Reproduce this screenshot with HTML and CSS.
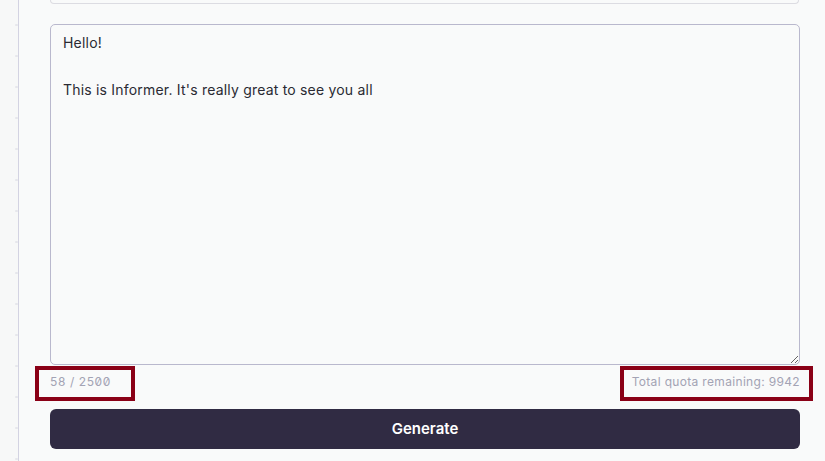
FILE: index.html
```html
<!DOCTYPE html>
<html lang="en">
<head>
<meta charset="utf-8">
<title>Informer</title>
<link rel="stylesheet" href="styles.css">
</head>
<body>
<div class="page">
  <aside class="rail"></aside>
  <main class="main">
    <div class="card-tail"></div>
    <textarea class="message">Hello!

This is Informer. It's really great to see you all</textarea>
    <div class="meta">
      <span class="count">58 / 2500</span>
      <span class="quota">Total quota remaining: 9942</span>
    </div>
    <button class="generate">Generate</button>
  </main>
</div>
<div class="mark mark-count"></div>
<div class="mark mark-quota"></div>
</body>
</html>
```

FILE: styles.css
```css
html, body {
  margin: 0;
  padding: 0;
  height: 100%;
  background: #f9fafa;
  font-family: Inter, "Noto Sans", sans-serif;
  overflow: hidden;
}

.page {
  display: flex;
  height: 461px;
}

.rail {
  width: 18px;
  flex: none;
  border-right: 1px solid #d3d3e2;
  background-color: #f7f8f8;
  background-image: radial-gradient(circle at 16.5px 25px, #e6e7ec 0 1px, transparent 1.5px);
  background-size: 18px 31px;
  background-repeat: repeat-y;
}

.main {
  width: 750px;
  padding-left: 31px;
  display: flex;
  flex-direction: column;
}

.card-tail {
  height: 3px;
  border: 1px solid #dcdce2;
  border-top: none;
  border-radius: 0 0 6px 6px;
  margin-right: 1px;
  background: #f9fafa;
}

.message {
  margin-top: 20px;
  height: 341px;
  box-sizing: border-box;
  width: 100%;
  border: 1px solid #b9b8cd;
  border-radius: 5px;
  background: #f9fafa;
  padding: 6px 12px;
  font-family: Inter, "Noto Sans", sans-serif;
  font-size: 14px;
  line-height: 23.5px;
  letter-spacing: 0.2px;
  color: #2a2a33;
  resize: vertical;
  outline: none;
}

.meta {
  display: flex;
  justify-content: space-between;
  align-items: center;
  height: 32px;
  font-size: 12px;
  letter-spacing: 0.33px;
  color: #a3a3b4;
}

.count {
  font-feature-settings: "zero" 1;
  letter-spacing: 0.6px;
}

.generate {
  margin-top: 12px;
  height: 40px;
  border: none;
  border-radius: 6px;
  background: #302b43;
  color: #ffffff;
  font-family: Inter, "Noto Sans", sans-serif;
  font-size: 15px;
  font-weight: 600;
  padding: 0 0 1px;
}

.mark {
  position: absolute;
  box-sizing: border-box;
  border: 4px solid #8a0016;
}

.mark-count {
  left: 35px;
  top: 366px;
  width: 100px;
  height: 35px;
}

.mark-quota {
  left: 620px;
  top: 366px;
  width: 193px;
  height: 35px;
}
```
